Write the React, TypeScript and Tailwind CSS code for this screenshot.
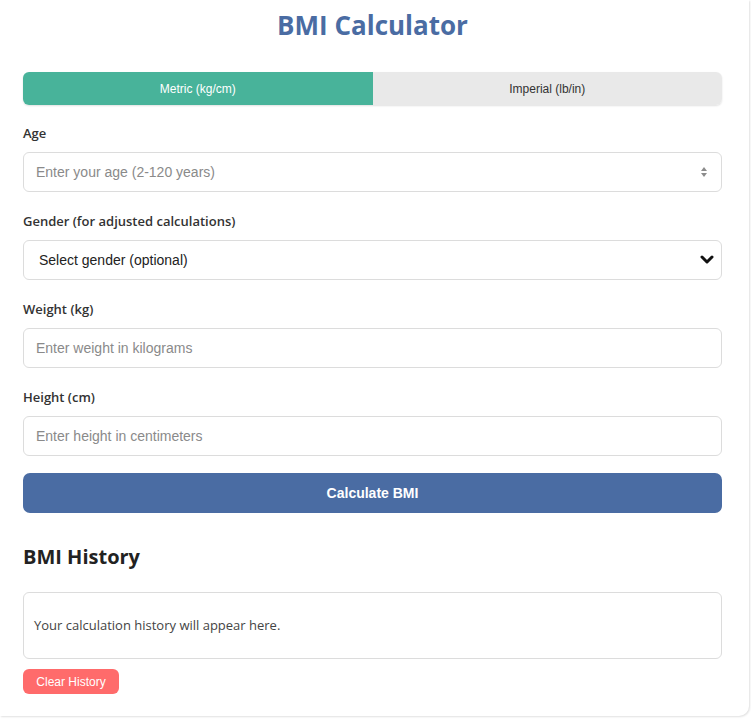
import React from "react";

const inputCls =
  "block w-full h-[40px] rounded-[6px] border border-[#dcdcdc] bg-white px-[12px] text-[14px] text-[#333] placeholder:text-[#8a8a8a] outline-none";
const labelCls =
  "block text-[13px] leading-[18px] font-semibold text-[#333] mb-[10px]";
const sans = { fontFamily: '"Open Sans", "Noto Sans", sans-serif' };
const arial = { fontFamily: '"Liberation Sans", Arial, sans-serif' };

export default function App() {
  return (
    <div className="bg-white min-h-[720px]">
      <div
        className="w-[749px] min-h-[716px] bg-white rounded-br-[10px] shadow-[1px_1px_2px_rgba(0,0,0,0.12)] pl-[23px] pr-[27px] pt-[7px] pb-[20px]"
        style={sans}
      >
        <h1 className="text-center text-[26px] leading-[36px] font-bold text-[#4a6ca3]">
          BMI Calculator
        </h1>

        <div className="mt-[29px] flex h-[33px] rounded-[6px] overflow-hidden shadow-[0_1px_2px_rgba(0,0,0,0.12)]" style={arial}>
          <button className="flex-1 bg-[#48b39a] text-white text-[12px] font-normal">
            Metric (kg/cm)
          </button>
          <button className="flex-1 bg-[#e9e9e9] text-[#333] text-[12px]">
            Imperial (lb/in)
          </button>
        </div>

        <div className="mt-[19px]">
          <label className={labelCls}>Age</label>
          <div className="relative">
            <input className={inputCls} style={arial} placeholder="Enter your age (2-120 years)" />
            <svg className="absolute right-[14px] top-[14px]" width="8" height="12" viewBox="0 0 8 12">
              <path d="M4 1 L7 5 L1 5 Z" fill="#8c8c8c" />
              <path d="M4 11 L7 7 L1 7 Z" fill="#8c8c8c" />
            </svg>
          </div>
        </div>

        <div className="mt-[20px]">
          <label className={labelCls}>Gender (for adjusted calculations)</label>
          <div className="relative">
            <select
              className="block w-full h-[40px] appearance-none rounded-[6px] border border-[#dcdcdc] bg-white pl-[15px] text-[14px] text-[#222] outline-none"
              style={arial}
              defaultValue=""
            >
              <option value="">Select gender (optional)</option>
              <option value="m">Male</option>
              <option value="f">Female</option>
            </select>
            <svg className="absolute right-[8px] top-[15px]" width="14" height="10" viewBox="0 0 14 10">
              <path d="M2 2 L7 7 L12 2" fill="none" stroke="#111" strokeWidth="3" strokeLinecap="round" strokeLinejoin="round" />
            </svg>
          </div>
        </div>

        <div className="mt-[20px]">
          <label className={labelCls}>Weight (kg)</label>
          <input className={inputCls} style={arial} placeholder="Enter weight in kilograms" />
        </div>

        <div className="mt-[20px]">
          <label className={labelCls}>Height (cm)</label>
          <input className={inputCls} style={arial} placeholder="Enter height in centimeters" />
        </div>

        <button
          className="mt-[17px] block w-full h-[40px] rounded-[7px] bg-[#4a6ca3] text-white text-[14px] font-bold"
          style={arial}
        >
          Calculate BMI
        </button>

        <h2 className="mt-[30px] text-[20px] leading-[28px] font-bold text-[#222]">BMI History</h2>

        <div className="mt-[21px] h-[67px] rounded-[6px] border border-[#dcdcdc] flex items-center px-[10px]">
          <p className="text-[13px] text-[#444]">Your calculation history will appear here.</p>
        </div>

        <button
          className="mt-[10px] block h-[25px] w-[96px] rounded-[6px] bg-[#ff6b6b] text-white text-[12px]"
          style={arial}
        >
          Clear History
        </button>
      </div>
    </div>
  );
}
